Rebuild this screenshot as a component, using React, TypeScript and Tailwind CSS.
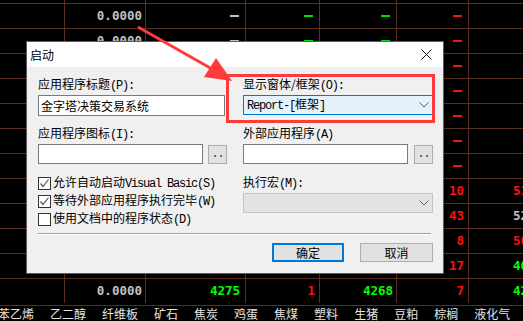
import React from 'react';

type Tone = 'g' | 'r' | 'w';
type Cell = null | { t: string; c: Tone } | { dash: Tone };

const textTone: Record<Tone, string> = {
  g: 'text-[#00ff00]',
  r: 'text-[#ff1010]',
  w: 'text-[#c0c0c0]',
};
const dashTone: Record<Tone, string> = {
  g: 'bg-[#00e000]',
  r: 'bg-[#ff1010]',
  w: 'bg-[#c0c0c0]',
};

// column widths include the 1px right grid line
const colW = ['w-[65px]', 'w-[81px]', 'w-[100px]', 'w-[74px]', 'w-[77px]', 'w-[72px]', 'flex-1'];
const textPad = ['', 'pr-[3px]', 'pr-[5px]', 'pr-[4px]', 'pr-[3px]', 'pr-[4px]', ''];

const dashRow: Cell[] = [null, { t: '0.0000', c: 'w' }, { dash: 'w' }, { dash: 'g' }, { dash: 'g' }, { dash: 'r' }, null];
const redOnly: Cell[] = [null, null, null, null, null, { dash: 'r' }, null];
const pair = (a: string, ac: Tone, b: string, bc: Tone): Cell[] => [null, null, null, null, null, { t: a, c: ac }, { t: b, c: bc }];

const rows: Cell[][] = [
  dashRow,
  dashRow,
  redOnly,
  redOnly,
  redOnly,
  redOnly,
  redOnly,
  pair('10', 'r', '51', 'r'),
  pair('43', 'r', '52', 'w'),
  pair('8', 'r', '50', 'r'),
  pair('17', 'r', '40', 'g'),
  [null, { t: '0.0000', c: 'w' }, { t: '4275', c: 'g' }, { t: '1', c: 'r' }, { t: '4268', c: 'g' }, { t: '7', c: 'r' }, { t: '42', c: 'g' }],
];

const tabs = ['苯乙烯', '乙二醇', '纤维板', '矿石', '焦炭', '鸡蛋', '焦煤', '塑料', '生猪', '豆粕', '棕榈', '液化气', '聚乙烯'];

function GridCell({ cell, i }: { cell: Cell; i: number }) {
  const line = i < 6 ? 'border-r border-[#5a2e20]' : '';
  let inner: React.ReactNode = null;
  if (cell && 'dash' in cell) {
    inner = <div className={`w-[9px] h-[2px] ${dashTone[cell.dash]}`} />;
  } else if (cell) {
    inner = <span className={textTone[cell.c]}>{cell.t}</span>;
  }
  const dash = cell && 'dash' in cell;
  return (
    <div
      className={`${colW[i]} ${line} h-full flex items-center shrink-0 ${
        i === 6 ? 'justify-start pl-[44px]' : dash ? 'justify-end pr-[6px]' : `justify-end ${textPad[i]}`
      }`}
    >
      {inner}
    </div>
  );
}

// latin text in the dialog, half-width like the system font
function L({ children }: { children: React.ReactNode }) {
  return <span className="font-['Liberation_Mono',monospace] tracking-[-1.2px]">{children}</span>;
}

function Chevron() {
  return (
    <svg width="10" height="6" viewBox="0 0 10 6" className="shrink-0">
      <polyline points="0.5,0.5 5,5 9.5,0.5" fill="none" stroke="#606060" strokeWidth="1" />
    </svg>
  );
}

function DotsButton() {
  return (
    <div className="w-[19px] h-[19px] bg-[#e1e1e1] border border-[#adadad] flex items-end justify-center pb-[3px] text-[12px] leading-none text-[#333]">
      <L>..</L>
    </div>
  );
}

function Check({ checked, children }: { checked?: boolean; children: React.ReactNode }) {
  return (
    <div className="h-[18px] flex items-center gap-[2px]">
      <div className="w-[13px] h-[13px] bg-white border border-[#333] flex items-center justify-center shrink-0">
        {checked && (
          <svg width="11" height="11" viewBox="0 0 11 11">
            <polyline points="1.5,5.5 4,8.5 9.5,1.5" fill="none" stroke="#555" strokeWidth="1.2" />
          </svg>
        )}
      </div>
      <span className="whitespace-nowrap">{children}</span>
    </div>
  );
}

function Dialog() {
  return (
    <div className="absolute left-[26px] top-[41px] w-[418px] h-[233px] border border-[#5c5c5c] bg-[#f0f0f0] flex flex-col text-[12px] leading-[14px] text-black font-['Noto_Sans_CJK_SC',sans-serif]">
      <div className="h-[25px] bg-white flex items-center justify-between pl-[3px] pr-[11px] shrink-0">
        <span>启动</span>
        <svg width="11" height="11" viewBox="0 0 11 11">
          <path d="M0.5 0.5 L10.5 10.5 M10.5 0.5 L0.5 10.5" stroke="#111" strokeWidth="1" />
        </svg>
      </div>

      <div className="flex-1 pl-[11px] pr-[10px] pt-[10px] flex flex-col">
        <div className="flex gap-[16px]">
          {/* left column */}
          <div className="w-[189px] flex flex-col">
            <div className="h-[14px] whitespace-nowrap">应用程序标题<L>(P):</L></div>
            <div className="mt-[4px] w-[187px] h-[21px] bg-white border border-[#7a7a7a] flex items-center pl-[2px] text-[12px]">
              金字塔决策交易系统
            </div>
            <div className="mt-[10px] h-[14px] whitespace-nowrap">应用程序图标<L>(I):</L></div>
            <div className="mt-[4px] flex gap-[5px] items-start">
              <div className="w-[165px] h-[20px] bg-white border border-[#7a7a7a]" />
              <div className="mt-[1px]">
                <DotsButton />
              </div>
            </div>
            <div className="mt-[10px] flex flex-col">
              <Check checked>
                允许自动启动<L>Visual Basic(S)</L>
              </Check>
              <Check checked>
                等待外部应用程序执行完毕<L>(W)</L>
              </Check>
              <Check>
                使用文档中的程序状态<L>(D)</L>
              </Check>
            </div>
          </div>

          {/* right column */}
          <div className="w-[190px] flex flex-col">
            <div className="h-[14px] whitespace-nowrap">显示窗体/框架<L>(O):</L></div>
            <div className="mt-[4px] w-[190px] h-[20px] bg-[#e5f1fb] border border-[#0078d7] flex items-center justify-between pl-[3px] pr-[3px]">
              <span>
                <L>Report-[</L>框架<L>]</L>
              </span>
              <Chevron />
            </div>
            <div className="mt-[11px] h-[14px] whitespace-nowrap">外部应用程序<L>(A)</L></div>
            <div className="mt-[4px] flex gap-[6px] items-start">
              <div className="w-[165px] h-[20px] bg-white border border-[#7a7a7a]" />
              <div className="mt-[1px]">
                <DotsButton />
              </div>
            </div>
            <div className="mt-[11px] h-[14px] whitespace-nowrap">执行宏<L>(M):</L></div>
            <div className="mt-[4px] w-[190px] h-[20px] bg-[#e3e3e3] border border-[#c4c4c4] flex items-center justify-end pr-[3px]">
              <Chevron />
            </div>
          </div>
        </div>

        <div className="mt-[5px] w-[393px] h-[2px] border-t border-[#a0a0a0] border-b border-b-white" />

        <div className="mt-[8px] w-[395px] flex justify-end gap-[16px]">
          <div className="w-[72px] h-[19px] border-2 border-[#0078d7] bg-[#e1e1e1] flex items-center justify-center">确定</div>
          <div className="w-[73px] h-[19px] border border-[#adadad] bg-[#e1e1e1] flex items-center justify-center">取消</div>
        </div>
      </div>

      {/* red highlight frame */}
      <div className="absolute left-[199px] top-[32px] w-[209px] h-[49px] border-[3px] border-[#ff3a3a]" />
    </div>
  );
}

export default function App() {
  return (
    <div className="relative w-[523px] h-[321px] bg-black overflow-hidden">
      <div className="font-['DejaVu_Sans_Mono',monospace] font-bold text-[12.5px] leading-none">
        <div className="h-[3px] flex">
          {colW.map((_, i) => (
            <GridCell key={i} cell={null} i={i} />
          ))}
        </div>
        {rows.map((r, ri) => (
          <div key={ri} className="h-[25px] flex border-t border-[#5a2e20]">
            {r.map((c, i) => (
              <GridCell key={i} cell={c} i={i} />
            ))}
          </div>
        ))}
      </div>

      <div className="mt-[2px] border-t border-[#3a3a3a]" />
      <div className="pt-[2px] -ml-[2px] flex gap-[16px] whitespace-nowrap text-[12px] leading-[12px] text-[#e4e4e4] font-['Noto_Sans_CJK_SC',sans-serif]">
        {tabs.map((t) => (
          <span key={t}>{t}</span>
        ))}
      </div>

      <Dialog />

      <svg className="absolute inset-0 pointer-events-none" width="523" height="321" viewBox="0 0 523 321">
        <line x1="138" y1="27" x2="212" y2="69" stroke="#ff3a3a" strokeWidth="3" />
        <polygon points="232,81 204,77 216,58" fill="#ff3a3a" />
      </svg>
    </div>
  );
}
